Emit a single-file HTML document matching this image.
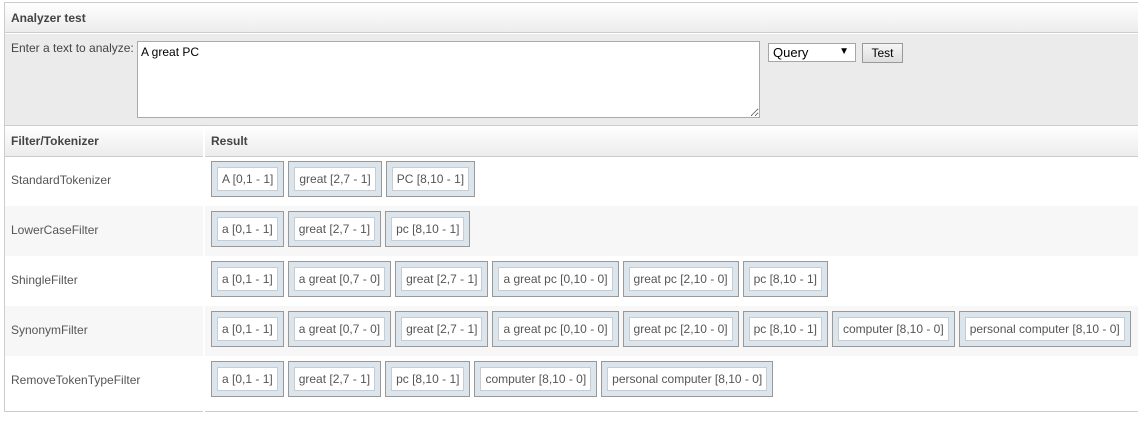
<!DOCTYPE html>
<html><head><style>
*{box-sizing:border-box}
html,body{margin:0;width:1138px;height:401px;overflow:hidden;background:#fff;font-family:"Liberation Sans",Arial,sans-serif;font-size:12px;color:#555}
.wrap{position:absolute;left:4px;top:2px;width:1140px;height:410px;border:1px solid #ccc}
.hdr{position:absolute;left:0;top:0;right:0;height:30px;background:linear-gradient(#fff,#ececec);border-bottom:1px solid #ccc;font-weight:bold;padding:8px 6px;color:#444}
.inp{position:absolute;left:0;top:31px;right:0;height:92px;background:#ebebeb;border-bottom:1px solid #ccc}
.inp .lbl{position:absolute;left:6px;top:7px;color:#444}
textarea{position:absolute;left:132px;top:7px;width:623px;height:77px;border:1px solid #aaa;background:#fff;font:12px "Liberation Sans",Arial,sans-serif;color:#000;padding:3px;resize:both}
.sel{position:absolute;left:763px;top:9px;width:88px;height:19px;border:1px solid #a6a6a6;background:#fff;color:#000;font-size:13px;padding:1px 4px}
.sel span{position:absolute;right:6px;top:2px;font-size:10px}
.btn{position:absolute;left:857px;top:9px;width:41px;height:20px;border:1px solid #999;background:linear-gradient(#f6f6f6,#dedede);color:#000;font-size:12px;text-align:center;line-height:18px}
.th{position:absolute;top:123px;height:31px;background:linear-gradient(#fff,#ececec);border-bottom:1px solid #ccc;font-weight:bold;padding:8px 6px;color:#444}
.row{position:absolute;left:0;right:0;height:50px}
.row.g{background:#f7f7f7}
.name{position:absolute;left:6px;top:17px}
.toks{position:absolute;left:206px;top:5px;display:flex;gap:4px}
.t{border:1px solid #999;background:#dce4ec;padding:5px}
.t div{border:1px solid #c5ccd4;background:#fff;padding:4px 4px;line-height:14px;white-space:nowrap}
.sep{position:absolute;left:198px;top:123px;width:2px;height:300px;background:#fff}
</style></head><body>
<div class="wrap">
<div class="hdr">Analyzer test</div>
<div class="inp"><div class="lbl">Enter a text to analyze:</div><textarea>A great PC</textarea><div class="sel">Query<span>▼</span></div><div class="btn">Test</div></div>
<div class="th" style="left:0;width:198px">Filter/Tokenizer</div>
<div class="th" style="left:200px;right:0">Result</div>
<div class="row" style="top:153px"><div class="name">StandardTokenizer</div><div class="toks"><div class="t"><div>A [0,1 - 1]</div></div><div class="t"><div>great [2,7 - 1]</div></div><div class="t"><div>PC [8,10 - 1]</div></div></div></div>
<div class="row g" style="top:203px"><div class="name">LowerCaseFilter</div><div class="toks"><div class="t"><div>a [0,1 - 1]</div></div><div class="t"><div>great [2,7 - 1]</div></div><div class="t"><div>pc [8,10 - 1]</div></div></div></div>
<div class="row" style="top:253px"><div class="name">ShingleFilter</div><div class="toks"><div class="t"><div>a [0,1 - 1]</div></div><div class="t"><div>a great [0,7 - 0]</div></div><div class="t"><div>great [2,7 - 1]</div></div><div class="t"><div>a great pc [0,10 - 0]</div></div><div class="t"><div>great pc [2,10 - 0]</div></div><div class="t"><div>pc [8,10 - 1]</div></div></div></div>
<div class="row g" style="top:303px"><div class="name">SynonymFilter</div><div class="toks"><div class="t"><div>a [0,1 - 1]</div></div><div class="t"><div>a great [0,7 - 0]</div></div><div class="t"><div>great [2,7 - 1]</div></div><div class="t"><div>a great pc [0,10 - 0]</div></div><div class="t"><div>great pc [2,10 - 0]</div></div><div class="t"><div>pc [8,10 - 1]</div></div><div class="t"><div>computer [8,10 - 0]</div></div><div class="t"><div>personal computer [8,10 - 0]</div></div></div></div>
<div class="row" style="top:353px"><div class="name">RemoveTokenTypeFilter</div><div class="toks"><div class="t"><div>a [0,1 - 1]</div></div><div class="t"><div>great [2,7 - 1]</div></div><div class="t"><div>pc [8,10 - 1]</div></div><div class="t"><div>computer [8,10 - 0]</div></div><div class="t"><div>personal computer [8,10 - 0]</div></div></div></div>
<div class="sep"></div>
</div>
</body></html>
